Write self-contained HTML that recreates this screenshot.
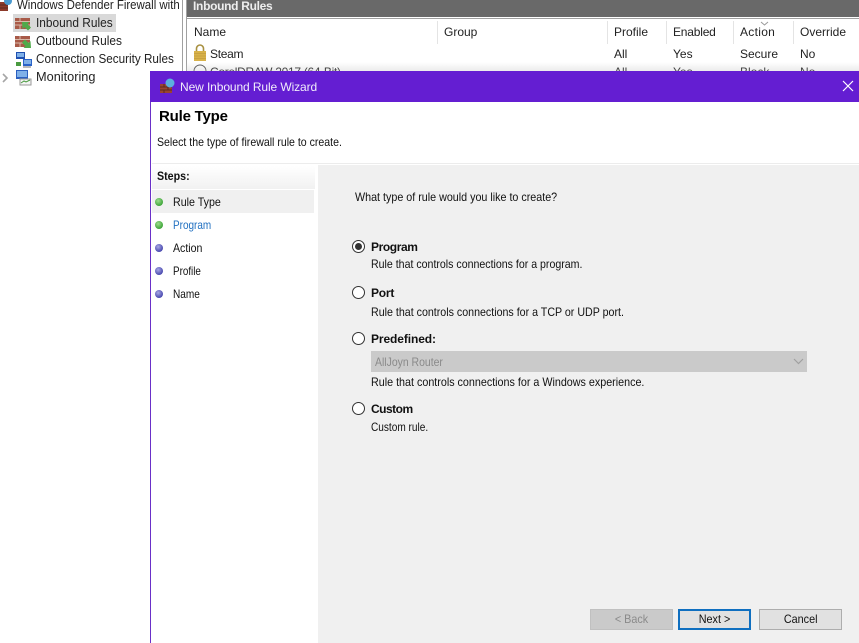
<!DOCTYPE html>
<html><head><meta charset="utf-8">
<style>
html,body{margin:0;padding:0;background:#fff}
#p{position:relative;width:859px;height:643px;overflow:hidden;background:#fff;font-family:"Liberation Sans",sans-serif;font-size:12px;color:#111}
#p div,#p svg{position:absolute}
.t{white-space:nowrap;line-height:16px;height:16px;transform-origin:0 50%;transform:scaleX(var(--s,.888))}
.b{font-weight:bold;letter-spacing:-.2px;transform:none}
.h{color:#222;transform:none}
.n{color:#222;font-size:13px;--s:.915}
.r{width:11px;height:11px;border:1px solid #333;border-radius:50%;background:#fff}
.dot{width:8px;height:8px;border-radius:50%}
.g{background:radial-gradient(circle at 40% 35%,#9ddc8e,#3fa63a 70%)}
.v{background:radial-gradient(circle at 40% 35%,#a9a9e4,#4a4ab0 70%)}
.btn{height:19px;line-height:19px;text-align:center;border:1px solid #adadad;background:#e1e1e1}
.btn span{display:inline-block;transform:scaleX(.9)}
</style></head><body><div id="p">

<!-- left tree -->
<svg style="left:0;top:0" width="14" height="12" viewBox="0 0 14 12"><rect x="0" y="2" width="8" height="9" fill="#8c3a2a"/><path d="M0 5h8M0 8h8" stroke="#5a2a20"/><circle cx="8" cy="1" r="4" fill="#4a9ad0"/></svg>
<div class="t n" style="left:17px;top:-3px;width:187px;overflow:hidden;--s:.88">Windows Defender Firewall with</div>
<div style="left:13px;top:14px;width:103px;height:18px;background:#d9d9d9"></div>
<svg style="left:15px;top:16px" width="17" height="16" viewBox="0 0 17 16"><rect x="0" y="2" width="15" height="11" fill="#a85a48"/><path d="M0 5.500h15M0 9h15M5 2v3.500M10 5.500v3.500M5 9v4" stroke="#d8b8a8"/><path d="M7 6l7.500 0-2 2 3.500 3.500-3 3L9.500 11l-2 2z" fill="#4faa4a"/></svg>
<svg style="left:15px;top:34px" width="17" height="16" viewBox="0 0 17 16"><rect x="0" y="2" width="15" height="11" fill="#a85a48"/><path d="M0 5.500h15M0 9h15M5 2v3.500M10 5.500v3.500M5 9v4" stroke="#d8b8a8"/><path d="M16 14l-7.500 0 2-2L7 8.500l3-3 3.500 3.500 2-2z" fill="#4faa4a"/></svg>
<svg style="left:15px;top:52px" width="17" height="16" viewBox="0 0 17 16"><rect x="1" y="0" width="9" height="7" fill="#1f4fb0"/><rect x="2" y="1" width="7" height="4" fill="#7fb0e8"/><rect x="8" y="7" width="9" height="7" fill="#2a63c8"/><rect x="9" y="8" width="7" height="4" fill="#7fb0e8"/><rect x="1" y="10" width="5" height="4" fill="#4a9a40"/><path d="M8 15h8" stroke="#777"/></svg>
<svg style="left:15px;top:70px" width="17" height="16" viewBox="0 0 17 16"><rect x="1" y="0" width="12" height="9" fill="#2a5fc0"/><rect x="2" y="1" width="10" height="6" fill="#7fb0e8"/><rect x="5" y="9" width="11" height="6" fill="#f4f4f4" stroke="#999"/><path d="M6 13l3-2 2 1 4-2" stroke="#4a9a40" fill="none"/></svg>
<div class="t n" style="left:36px;top:15px">Inbound Rules</div>
<div class="t n" style="left:36px;top:33px">Outbound Rules</div>
<div class="t n" style="left:36px;top:51px;--s:.9">Connection Security Rules</div>
<div class="t n" style="left:36px;top:69px;--s:.98">Monitoring</div>
<svg style="left:2px;top:73px" width="7" height="10" viewBox="0 0 7 10"><path d="M1 1l4 4-4 4" stroke="#a6a6a6" stroke-width="1.600" fill="none"/></svg>
<div style="left:182px;top:0;width:1px;height:71px;background:#a0a0a0"></div>

<!-- inbound rules pane -->
<div style="left:186px;top:0;width:673px;height:17px;background:#696969"></div>
<div style="left:186px;top:18px;width:673px;height:1px;background:#a0a0a0"></div>
<div style="left:186px;top:0;width:1px;height:71px;background:#a0a0a0"></div>
<div class="t b" style="left:193px;top:-2px;color:#eee;letter-spacing:-.3px">Inbound Rules</div>
<div style="left:437px;top:21px;width:1px;height:23px;background:#e4e4e4"></div>
<div style="left:607px;top:21px;width:1px;height:23px;background:#e4e4e4"></div>
<div style="left:666px;top:21px;width:1px;height:23px;background:#e4e4e4"></div>
<div style="left:733px;top:21px;width:1px;height:23px;background:#e4e4e4"></div>
<div style="left:793px;top:21px;width:1px;height:23px;background:#e4e4e4"></div>
<div class="t h" style="left:194px;top:24px">Name</div>
<div class="t h" style="left:444px;top:24px">Group</div>
<div class="t h" style="left:614px;top:24px">Profile</div>
<div class="t h" style="left:673px;top:24px;letter-spacing:-.2px">Enabled</div>
<div class="t h" style="left:740px;top:24px;letter-spacing:.3px">Action</div>
<div class="t h" style="left:800px;top:24px">Override</div>
<svg style="left:760px;top:21px" width="9" height="5" viewBox="0 0 9 5"><path d="M1 1l3.500 3 3.500-3" stroke="#999" fill="none"/></svg>
<svg style="left:193px;top:44px" width="14" height="18" viewBox="0 0 14 18"><path d="M3.500 8V4.500a3.500 3.500 0 0 1 7 0V8" fill="none" stroke="#a89040" stroke-width="1.600"/><rect x="1" y="7" width="12" height="10" fill="#d8b24a"/><path d="M1 9.500h12M1 12h12M1 14.500h12" stroke="#b8923a" stroke-width=".6"/></svg>
<div class="t h" style="left:210px;top:46px;letter-spacing:-.3px">Steam</div>
<div class="t h" style="left:614px;top:46px">All</div>
<div class="t h" style="left:673px;top:46px">Yes</div>
<div class="t h" style="left:740px;top:46px">Secure</div>
<div class="t h" style="left:800px;top:46px">No</div>
<div class="t h" style="left:210px;top:64px;letter-spacing:-.3px">CorelDRAW 2017 (64-Bit)</div>
<div class="t h" style="left:614px;top:64px">All</div>
<div class="t h" style="left:673px;top:64px">Yes</div>
<div class="t h" style="left:740px;top:64px">Block</div>
<div class="t h" style="left:800px;top:64px">No</div>
<svg style="left:193px;top:64px" width="14" height="8" viewBox="0 0 14 8"><circle cx="7" cy="7" r="6" fill="#fff" stroke="#555"/></svg>
<div style="left:186px;top:62px;width:673px;height:9px;background:linear-gradient(rgba(200,200,200,0),rgba(190,190,190,.3))"></div>

<!-- dialog -->
<div style="left:150px;top:71px;width:709px;height:572px;background:#fff"></div>
<div style="left:150px;top:71px;width:709px;height:31px;background:#641ed2"></div>
<div style="left:150px;top:102px;width:1px;height:541px;background:#6a30c8"></div>
<svg style="left:160px;top:78px" width="16" height="16" viewBox="0 0 16 16"><rect x="0" y="6" width="12" height="9" fill="#9a4430"/><path d="M0 9h12M0 12h12M4 6v3M8 9v3M4 12v3" stroke="#5a2a20"/><circle cx="10" cy="5" r="4.500" fill="#5cb0de"/></svg>
<div class="t" style="left:180px;top:79px;color:#f1ecfb;transform:none;letter-spacing:-.1px">New Inbound Rule Wizard</div>
<svg style="left:842px;top:80px" width="12" height="12" viewBox="0 0 12 12"><path d="M1 1l10 10M11 1L1 11" stroke="#fff" stroke-width="1.200"/></svg>
<div class="t b" style="left:159px;top:109px;font-size:15px;color:#000;letter-spacing:-.2px">Rule Type</div>
<div class="t" style="left:157px;top:134px;--s:.88">Select the type of firewall rule to create.</div>
<div style="left:152px;top:163px;width:707px;height:1px;background:#ececec"></div>

<!-- steps -->
<div style="left:152px;top:166px;width:163px;height:23px;background:linear-gradient(#fff,#f1f1f1)"></div>
<div class="t b" style="left:157px;top:168px;letter-spacing:0;transform:scaleX(.89)">Steps:</div>
<div style="left:152px;top:190px;width:162px;height:23px;background:#f0f0f0"></div>
<div class="dot g" style="left:155px;top:198px"></div>
<div class="dot g" style="left:155px;top:221px"></div>
<div class="dot v" style="left:155px;top:244px"></div>
<div class="dot v" style="left:155px;top:267px"></div>
<div class="dot v" style="left:155px;top:290px"></div>
<div class="t" style="left:173px;top:194px;--s:.889">Rule Type</div>
<div class="t" style="left:173px;top:217px;color:#1f6fc0;--s:.83">Program</div>
<div class="t" style="left:173px;top:240px;--s:.88">Action</div>
<div class="t" style="left:173px;top:263px;--s:.82">Profile</div>
<div class="t" style="left:173px;top:286px;--s:.84">Name</div>

<!-- main panel -->
<div style="left:318px;top:165px;width:541px;height:478px;background:#f0f0f0"></div>
<div class="t" style="left:355px;top:189px;--s:.894">What type of rule would you like to create?</div>

<div class="r" style="left:352px;top:240px"></div>
<div style="left:355px;top:243px;width:7px;height:7px;border-radius:50%;background:#333"></div>
<div class="t b" style="left:371px;top:239px;letter-spacing:-.4px">Program</div>
<div class="t" style="left:371px;top:256px;--s:.883">Rule that controls connections for a program.</div>

<div class="r" style="left:352px;top:286px"></div>
<div class="t b" style="left:371px;top:285px">Port</div>
<div class="t" style="left:371px;top:304px">Rule that controls connections for a TCP or UDP port.</div>

<div class="r" style="left:352px;top:332px"></div>
<div class="t b" style="left:371px;top:331px;letter-spacing:-.1px">Predefined:</div>
<div style="left:371px;top:351px;width:436px;height:21px;background:#cacaca"></div>
<div class="t" style="left:375px;top:354px;color:#8a8a8a;--s:.87">AllJoyn Router</div>
<svg style="left:793px;top:358px" width="11" height="7" viewBox="0 0 11 7"><path d="M1 1l4.500 4.500L10 1" stroke="#a0a0a0" stroke-width="1.200" fill="none"/></svg>
<div class="t" style="left:371px;top:374px;--s:.895">Rule that controls connections for a Windows experience.</div>

<div class="r" style="left:352px;top:402px"></div>
<div class="t b" style="left:371px;top:401px;letter-spacing:-.5px">Custom</div>
<div class="t" style="left:371px;top:419px;--s:.84">Custom rule.</div>

<!-- buttons -->
<div class="btn" style="left:590px;top:609px;width:81px;background:#cacaca;border-color:#c0c0c0;color:#8a8a8a"><span>&lt; Back</span></div>
<div class="btn" style="left:678px;top:609px;width:69px;border:2px solid #0f6fc0;height:17px;line-height:17px"><span>Next &gt;</span></div>
<div class="btn" style="left:759px;top:609px;width:81px"><span>Cancel</span></div>
</div></body></html>
